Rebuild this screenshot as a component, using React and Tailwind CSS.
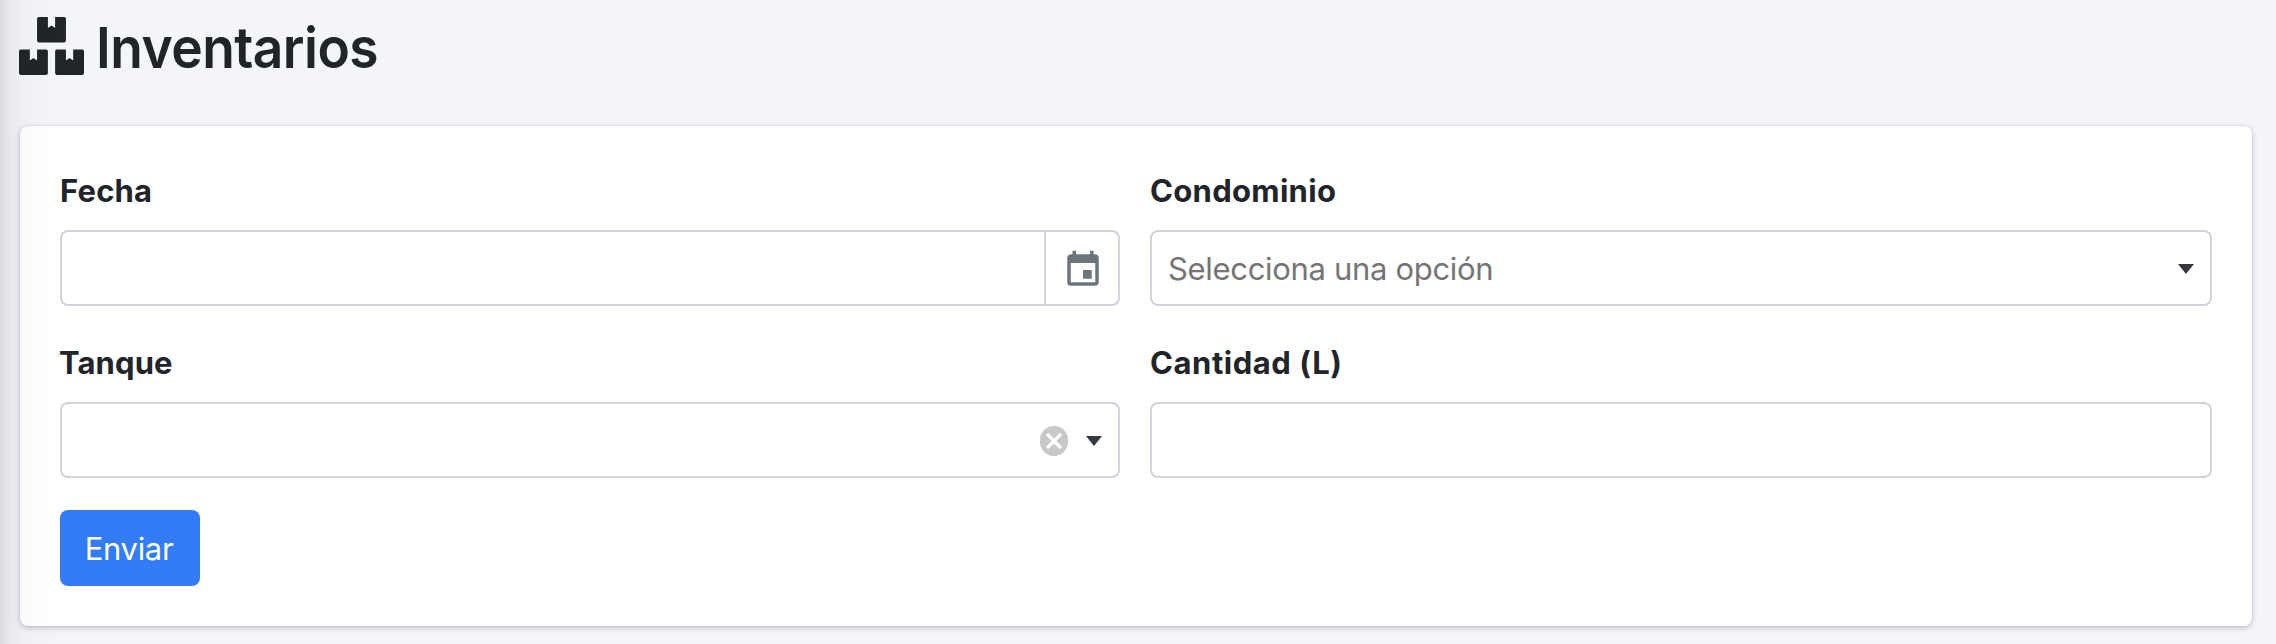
import { FaBoxes } from "react-icons/fa";
import { MdEvent } from "react-icons/md";

function Label({ children, className = "" }) {
  return <label className={`mb-4 block h-12 pt-px text-[31px] leading-[48px] font-bold ${className}`}>{children}</label>;
}

function Caret() {
  return (
    <svg viewBox="0 0 16 10" className="h-2.5 w-4 shrink-0 fill-[#343a40]">
      <path d="M0 0h16L8 10z" />
    </svg>
  );
}

const field = "flex h-[76px] items-center rounded-lg border-2 border-[#ced4da] bg-white";

export default function App() {
  return (
    <div className="relative h-[644px] w-full overflow-hidden bg-[#f4f5fa] pt-[17px] pl-5 font-['Inter',sans-serif] text-[#212529]">
      <h1 className="flex h-[109px] items-start text-[57px] leading-[58px] font-[560] tracking-[-0.6px]">
        <FaBoxes className="-ml-px h-[58px] w-[65px] shrink-0" />
        <span className="ml-3 origin-left scale-x-[0.936] pt-0.5 whitespace-nowrap">Inventarios</span>
      </h1>

      <section className="h-[500px] w-[2232px] rounded-lg bg-white p-10 shadow-[0_0_2px_rgba(0,0,0,0.125),0_2px_6px_rgba(0,0,0,0.2)]">
        <form className="grid grid-cols-[1060px_1062px] gap-x-[30px] gap-y-8">
          <div>
            <Label className="tracking-[0.2px]">Fecha</Label>
            <div className={field}>
              <div className="flex-1" />
              <div className="flex h-full w-[74px] items-center justify-center border-l-2 border-[#ced4da] pt-1 pl-0.5 text-[#6c757d]">
                <MdEvent className="size-[42px]" />
              </div>
            </div>
          </div>
          <div>
            <Label className="tracking-[0.3px]">Condominio</Label>
            <div className={`${field} justify-between px-4 pt-0.5`}>
              <span className="text-[31px] tracking-[-0.32px] text-[#757575]">Selecciona una opción</span>
              <Caret />
            </div>
          </div>
          <div>
            <Label className="-ml-px tracking-[0.1px]">Tanque</Label>
            <div className={`${field} justify-end px-4 pt-0.5`}>
              <svg viewBox="0 0 28 30" className="mr-[18px] h-[30px] w-7">
                <rect width="28" height="30" rx="14" fill="#c8c8c8" />
                <path d="M7 8l14 14M21 8L7 22" stroke="#fff" strokeWidth="3.2" />
              </svg>
              <Caret />
            </div>
          </div>
          <div>
            <Label className="tracking-[0.55px]">Cantidad (L)</Label>
            <div className={field} />
          </div>
          <button type="button" className="h-[76px] w-[140px] rounded-lg bg-[#327cf7] pt-0.5 pr-0.5 text-[31px] tracking-[-0.3px] text-white">
            Enviar
          </button>
        </form>
      </section>

      <div className="pointer-events-none absolute top-[-100px] -left-[200px] h-[900px] w-[200px] shadow-[0_28px_56px_rgba(0,0,0,0.1),0_20px_20px_rgba(0,0,0,0.1)]" />
    </div>
  );
}
